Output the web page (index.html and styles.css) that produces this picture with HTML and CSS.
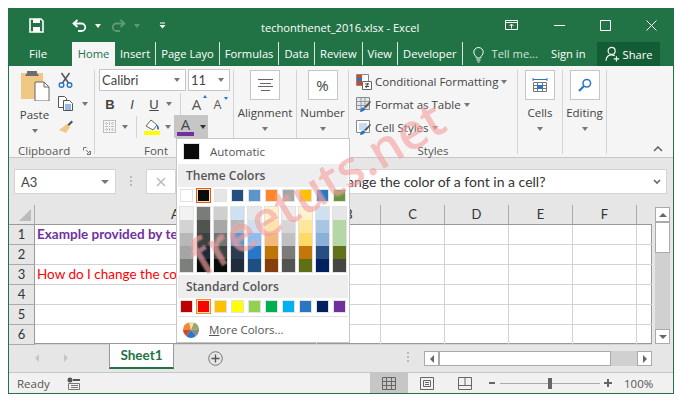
FILE: index.html
```html
<!DOCTYPE html>
<html lang="en">
<head>
  <meta charset="UTF-8">
  <title>techonthenet_2016.xlsx - Excel</title>
  <link rel="stylesheet" href="styles.css">
</head>
<body>
  <div class="window">

    <!-- title bar -->
    <div class="titlebar">
      <div class="qat">
        <svg class="qat-save" width="15" height="15" viewBox="0 0 15 15"><path d="M1 1h11l2 2v11H1z" fill="none" stroke="#fff" stroke-width="1.6"/><path d="M4 1h7v4H4zM4 9h7v5H4z" fill="#fff"/></svg>
        <svg class="qat-undo" width="15" height="13" viewBox="0 0 15 13"><path d="M5.5 1 1.5 4.5 5.5 8M2 4.5h7.5a3.6 3.6 0 0 1 0 7.5H6" fill="none" stroke="#fff" stroke-width="1.8"/></svg>
        <span class="caret caret-white"></span>
        <svg class="qat-redo" width="15" height="13" viewBox="0 0 15 13"><path d="M9.5 1l4 3.5-4 3.5M13 4.5H5.5a3.6 3.6 0 0 0 0 7.5H9" fill="none" stroke="#5c9a78" stroke-width="1.8"/></svg>
        <span class="caret caret-dim"></span>
        <svg class="qat-more" width="7" height="7" viewBox="0 0 7 7"><path d="M1 1h5" stroke="#fff"/><path d="M0.5 3h6L3.5 6.5z" fill="#fff"/></svg>
      </div>
      <div class="doc-title">techonthenet_2016.xlsx - Excel</div>
      <div class="winctl">
        <svg width="14" height="11" viewBox="0 0 14 11"><path d="M.5.5h12v9H.5zM.5 2.500h12M6.500 8.500V4M4.500 6l2-2 2 2" fill="none" stroke="#fff"/></svg>
        <svg width="11" height="11" viewBox="0 0 11 11"><path d="M0 5.500h11" stroke="#fff"/></svg>
        <svg width="11" height="11" viewBox="0 0 11 11"><path d="M.5.500h10v10H.5z" fill="none" stroke="#fff"/></svg>
        <svg width="11" height="11" viewBox="0 0 11 11"><path d="M.5.500l10 10M10.500.500l-10 10" stroke="#fff"/></svg>
      </div>
    </div>

    <!-- tabs -->
    <div class="tabs">
      <span class="tab-file">File</span>
      <span class="tab-home">Home</span>
      <span class="tab">Insert</span>
      <span class="tab">Page Layo</span>
      <span class="tab">Formulas</span>
      <span class="tab">Data</span>
      <span class="tab">Review</span>
      <span class="tab">View</span>
      <span class="tab">Developer</span>
      <svg class="bulb" width="11" height="16" viewBox="0 0 11 16"><path d="M3.500 11C3 8.500.8 8 .8 5.200a4.700 4.700 0 0 1 9.400 0C10.200 8 8 8.500 7.500 11zM3.500 13h4M4.500 15h2" fill="none" stroke="#fff"/></svg>
      <span class="tell">Tell me...</span>
      <span class="signin">Sign in</span>
      <span class="share">
        <svg width="15" height="16" viewBox="0 0 17 17"><circle cx="7.500" cy="5" r="4" fill="none" stroke="#fff" stroke-width="1.300"/><path d="M1 16c.5-4 3-6.500 6.500-6.500 1.500 0 2.500.4 3.500 1M10 14h6M13 11v6" fill="none" stroke="#fff" stroke-width="1.300"/></svg>
        Share
      </span>
    </div>

    <!-- ribbon -->
    <div class="ribbon">
      <div class="group group-clipboard">
        <div class="group-body clip-body">
          <div class="paste">
            <svg width="30" height="31" viewBox="0 0 30 31"><path d="M1 3h22v26H1z" fill="#efc983"/><path d="M7 3V1h10v2l2 3H5z" fill="#6d6d6d"/><path d="M15 12h9l5 5v14H15z" fill="#fff" stroke="#666"/><path d="M24 12v5h5" fill="none" stroke="#666"/></svg>
            <span class="paste-label">Paste</span>
            <span class="caret"></span>
          </div>
          <div class="clip-tools">
            <svg width="15" height="16" viewBox="0 0 15 16"><path d="M3.500 1l7 10M11.500 1l-7 10" stroke="#555" stroke-width="1.500"/><circle cx="3.500" cy="13" r="2.300" fill="none" stroke="#2b76c4" stroke-width="1.400"/><circle cx="11.500" cy="13" r="2.300" fill="none" stroke="#2b76c4" stroke-width="1.400"/></svg>
            <div class="copy-row">
              <svg width="15" height="15" viewBox="0 0 15 15"><path d="M.5.500h6l2 2v9h-8z" fill="#fff" stroke="#555"/><path d="M5.500 4.500h6l3 3v7h-9z" fill="#fff" stroke="#555"/><path d="M7 9h6M7 11h6M7 13h6" stroke="#2b76c4"/></svg>
              <span class="caret"></span>
            </div>
            <svg width="16" height="15" viewBox="0 0 16 15"><path d="M9 5l3 3-4 6-7-3z" fill="#efc983"/><path d="M9.500 5.500l4-4 1.500 1.500-4 4z" fill="#555"/></svg>
          </div>
        </div>
        <div class="group-label label-clipboard">Clipboard
          <svg width="8" height="8" viewBox="0 0 8 8"><path d="M.5 3.500v-3h3M7.500 4v3.500H4M3 3l3.500 3.500M4 7l3-3" fill="none" stroke="#777"/></svg>
        </div>
      </div>

      <div class="group group-font">
        <div class="group-body font-body">
          <div class="font-row">
            <div class="combo combo-name">Calibri<span class="caret"></span></div>
            <div class="combo combo-size">11<span class="caret"></span></div>
          </div>
          <div class="font-row row-style">
            <b class="fmt">B</b>
            <i class="fmt">I</i>
            <u class="fmt">U</u>
            <span class="caret"></span>
            <span class="vsep"></span>
            <span class="grow">A<em class="tri-up"></em></span>
            <span class="shrink">A<em class="tri-down"></em></span>
          </div>
          <div class="font-row row-color">
            <svg width="13" height="13" viewBox="0 0 13 13"><path d="M.5.500h12v12H.5z" fill="none" stroke="#888" stroke-dasharray="1 1"/><path d="M6.500 0v13M0 6.500h13M0 3.500h13M0 9.500h13M3.500 0v13M9.500 0v13" stroke="#bbb" stroke-dasharray="1 1"/></svg>
            <span class="caret"></span>
            <span class="vsep vsep-tall"></span>
            <span class="fill-icon">
              <svg width="16" height="12" viewBox="0 0 16 12"><path d="M2 7l5-6 6 5-4 5z" fill="#fff" stroke="#666"/><path d="M13 6c1 0 2 2 2 3.500S13 11 13 9z" fill="#2b76c4"/></svg>
              <em class="fill-bar"></em>
            </span>
            <span class="caret caret-fill"></span>
            <span class="color-btn">
              <span class="color-a">A<em class="color-bar"></em></span>
              <span class="caret caret-dark"></span>
            </span>
          </div>
        </div>
        <div class="group-label label-font">Font</div>
      </div>

      <div class="group group-align">
        <div class="big-btn">
          <span class="big-box">
            <svg width="15" height="12" viewBox="0 0 15 12"><path d="M0 .5h15M2 4.500h11M0 7.500h15M3 11.500h9" stroke="#666"/></svg>
          </span>
          <span class="big-label">Alignment</span>
          <span class="caret"></span>
        </div>
      </div>

      <div class="group group-number">
        <div class="big-btn">
          <span class="big-box big-pct">%</span>
          <span class="big-label">Number</span>
          <span class="caret"></span>
        </div>
      </div>

      <div class="group group-styles">
        <div class="group-body styles-body">
          <div class="style-row">
            <svg width="16" height="16" viewBox="0 0 16 16"><path d="M.5.500h12v11H.5z" fill="#fff" stroke="#888"/><path d="M1 1h5v3H1z" fill="#d24726"/><path d="M1 4h5v3H1z" fill="#2b76c4"/><path d="M1 7h5v4H1z" fill="#d24726"/><path d="M6.500 7.500h9v8h-9z" fill="#fff" stroke="#666"/><path d="M9 10h4M9 12.500h4M10 14l2-5" stroke="#444"/></svg>
            <span>Conditional Formatting</span><span class="caret"></span>
          </div>
          <div class="style-row">
            <svg width="16" height="16" viewBox="0 0 16 16"><path d="M.5.500h13v12H.5z" fill="#dfe6ee" stroke="#888"/><path d="M5 1v11M9 1v11M1 4.500h12M1 8.500h12" stroke="#999"/><path d="M15 5l-5 6-2-1 6-6z" fill="#555"/><path d="M4 15c0-3 2-5 4-4.500s1 4.500-4 4.500z" fill="#2b76c4"/></svg>
            <span>Format as Table</span><span class="caret"></span>
          </div>
          <div class="style-row">
            <svg width="16" height="16" viewBox="0 0 16 16"><path d="M.5.500h13v12H.5z" fill="#fff" stroke="#888"/><path d="M3 3h8v7H3z" fill="#c8dcef"/><path d="M15 5l-5 6-2-1 6-6z" fill="#555"/><path d="M4 15c0-3 2-5 4-4.500s1 4.500-4 4.500z" fill="#2b76c4"/></svg>
            <span>Cell Styles</span><span class="caret"></span>
          </div>
        </div>
        <div class="group-label">Styles</div>
      </div>

      <div class="group group-cells">
        <div class="big-btn">
          <span class="big-box">
            <svg width="16" height="15" viewBox="0 0 16 15"><path d="M1 1.500h14M1 0v3M15 0v3" stroke="#2b76c4"/><path d="M1.500 4.500h13v9h-13zM1.500 7.500h13M1.500 10.500h13M5.500 4.500v9M10.500 4.500v9" fill="none" stroke="#777"/><path d="M5 7h6v4H5z" fill="#2b76c4"/></svg>
          </span>
          <span class="big-label">Cells</span>
          <span class="caret"></span>
        </div>
      </div>

      <div class="group group-editing">
        <div class="big-btn">
          <span class="big-box">
            <svg width="14" height="14" viewBox="0 0 14 14"><circle cx="8.800" cy="5.200" r="3.800" fill="none" stroke="#2b76c4" stroke-width="1.500"/><path d="M6 8l-5 5" stroke="#2b76c4" stroke-width="2.200"/></svg>
          </span>
          <span class="big-label">Editing</span>
          <span class="caret"></span>
        </div>
      </div>

      <svg class="collapse" width="10" height="6" viewBox="0 0 10 6"><path d="M1 5l4-4 4 4" fill="none" stroke="#666" stroke-width="1.600"/></svg>
    </div>

    <!-- formula bar -->
    <div class="formula">
      <div class="namebox">A3<span class="caret"></span></div>
      <span class="dots"></span>
      <div class="fx-btn">
        <svg width="10" height="10" viewBox="0 0 10 10"><path d="M1 1l8 8M9 1l-8 8" stroke="#bbb" stroke-width="1.500"/></svg>
      </div>
      <div class="formula-input">
        <span class="formula-text">How do I change the color of a font in a cell?</span>
        <svg width="8" height="6" viewBox="0 0 8 6"><path d="M1 1l3 3 3-3" fill="none" stroke="#666" stroke-width="1.600"/></svg>
      </div>
    </div>

    <!-- sheet -->
    <div class="sheet">
      <div class="grid">
        <div class="corner"><em></em></div><div class="ch">A</div><div class="ch">B</div><div class="ch">C</div><div class="ch">D</div><div class="ch">E</div><div class="ch">F</div><div class="ch ch-end"></div>

        <div class="rh">1</div><div class="c c-example">Example provided by techonthenet.com</div><div class="c"></div><div class="c"></div><div class="c"></div><div class="c"></div><div class="c"></div><div class="c"></div>
        <div class="rh">2</div><div class="c"></div><div class="c"></div><div class="c"></div><div class="c"></div><div class="c"></div><div class="c"></div><div class="c"></div>
        <div class="rh">3</div><div class="c c-question">How do I change the color of a font in a cell?</div><div class="c"></div><div class="c"></div><div class="c"></div><div class="c"></div><div class="c"></div><div class="c"></div>
        <div class="rh">4</div><div class="c"></div><div class="c"></div><div class="c"></div><div class="c"></div><div class="c"></div><div class="c"></div><div class="c"></div>
        <div class="rh">5</div><div class="c"></div><div class="c"></div><div class="c"></div><div class="c"></div><div class="c"></div><div class="c"></div><div class="c"></div>
        <div class="rh">6</div><div class="c"></div><div class="c"></div><div class="c"></div><div class="c"></div><div class="c"></div><div class="c"></div><div class="c"></div>
      </div>
      <div class="vscroll">
        <span class="sb-btn"><em class="arr-up"></em></span>
        <span class="sb-thumb-v"></span>
        <span class="sb-track"></span>
        <span class="sb-btn"><em class="arr-down"></em></span>
      </div>
    </div>

    <!-- sheet tabs -->
    <div class="sheetbar">
      <span class="nav-l"></span>
      <span class="nav-r"></span>
      <span class="sheet-tab">Sheet1</span>
      <svg class="add-sheet" width="15" height="15" viewBox="0 0 15 15"><circle cx="7.500" cy="7.500" r="6.800" fill="none" stroke="#777"/><path d="M7.500 3.500v8M3.500 7.500h8" stroke="#555" stroke-width="1.300"/></svg>
      <span class="dots dots-h"></span>
      <div class="hscroll">
        <span class="sb-btn-h"><em class="arr-left"></em></span>
        <span class="sb-thumb-h"></span>
        <span class="sb-track"></span>
        <span class="sb-btn-h"><em class="arr-right"></em></span>
      </div>
    </div>

    <!-- status bar -->
    <div class="statusbar">
      <span class="ready">Ready</span>
      <svg class="macro" width="13" height="13" viewBox="0 0 13 13"><circle cx="3" cy="3" r="2.500" fill="#555"/><path d="M6 2h7v2H6z" fill="#555"/><path d="M1.500 6.500h11v6h-11zM4 8.500h7M4 10.500h7" fill="none" stroke="#777"/></svg>
      <span class="view-active">
        <svg width="14" height="13" viewBox="0 0 14 13"><path d="M.5.500h13v12H.5zM.5 4.500h13M.5 8.500h13M4.500.500v12M9.500.500v12" fill="none" stroke="#666"/></svg>
      </span>
      <svg class="view-layout" width="14" height="13" viewBox="0 0 14 13"><path d="M.5.500h13v12H.5z" fill="none" stroke="#666"/><path d="M3.500 3.500h7v6h-7zM5 5.500h4M5 7.500h4" fill="none" stroke="#666"/></svg>
      <svg class="view-break" width="14" height="13" viewBox="0 0 14 13"><path d="M.5.500h13v12H.5zM.5 8.500h13M7 .500v8" fill="none" stroke="#666"/></svg>
      <span class="zoom-minus"></span>
      <span class="slider"><em></em></span>
      <span class="zoom-plus"></span>
      <span class="zoom-val">100%</span>
    </div>

    <!-- font colour dropdown -->
    <div class="colormenu">
      <div class="auto-row"><span class="auto-swatch"></span><span>Automatic</span></div>
      <div class="menu-head">Theme Colors</div>
      <div class="swatches">
        <span style="background:#ffffff"></span>
        <span class="picked" style="background:#090c0a"></span>
        <span style="background:#e7e6e6"></span>
        <span style="background:#254f80"></span>
        <span style="background:#5b95cc"></span>
        <span style="background:#ff862a"></span>
        <span style="background:#a5a5a5"></span>
        <span style="background:#ffc000"></span>
        <span style="background:#2a75c4"></span>
        <span style="background:#6b9440"></span>
      </div>
      <div class="tints">
        <div class="tint"><span style="background:#f2f2f2"></span><span style="background:#d3d3d3"></span><span style="background:#b8b6b7"></span><span style="background:#a6a5a6"></span><span style="background:#7d7f7c"></span></div>
        <div class="tint"><span style="background:#7a7c7a"></span><span style="background:#50534f"></span><span style="background:#3e413d"></span><span style="background:#20283a"></span><span style="background:#070c09"></span></div>
        <div class="tint"><span style="background:#cfcfcf"></span><span style="background:#a8a7a8"></span><span style="background:#727470"></span><span style="background:#404240"></span><span style="background:#080d09"></span></div>
        <div class="tint"><span style="background:#cfe0f1"></span><span style="background:#b8b6ba"></span><span style="background:#6a93c2"></span><span style="background:#2c3b52"></span><span style="background:#202b3b"></span></div>
        <div class="tint"><span style="background:#e6e6e6"></span><span style="background:#cde0f2"></span><span style="background:#8fbcf0"></span><span style="background:#2577c9"></span><span style="background:#1f4e80"></span></div>
        <div class="tint"><span style="background:#fff1cc"></span><span style="background:#ffe4a8"></span><span style="background:#f4b87a"></span><span style="background:#bf7505"></span><span style="background:#843f0b"></span></div>
        <div class="tint"><span style="background:#ededed"></span><span style="background:#d6d6d6"></span><span style="background:#c0c0c0"></span><span style="background:#7b7b7a"></span><span style="background:#525452"></span></div>
        <div class="tint"><span style="background:#fff2cc"></span><span style="background:#ffe69a"></span><span style="background:#ffd966"></span><span style="background:#c4760b"></span><span style="background:#5e6f15"></span></div>
        <div class="tint"><span style="background:#cfe0f1"></span><span style="background:#a8c6e3"></span><span style="background:#8aafd8"></span><span style="background:#264e80"></span><span style="background:#00205f"></span></div>
        <div class="tint"><span style="background:#e6e6e6"></span><span style="background:#b5d7a6"></span><span style="background:#b5d7a6"></span><span style="background:#62721a"></span><span style="background:#444644"></span></div>
      </div>
      <div class="menu-head head-std">Standard Colors</div>
      <div class="swatches">
        <span style="background:#c00000"></span>
        <span class="picked-light" style="background:#ff0000"></span>
        <span style="background:#ffc000"></span>
        <span style="background:#ffff00"></span>
        <span style="background:#92d050"></span>
        <span style="background:#00b050"></span>
        <span style="background:#00b0f0"></span>
        <span style="background:#2a75c4"></span>
        <span style="background:#002060"></span>
        <span style="background:#7030a0"></span>
      </div>
      <div class="more-row">
        <svg width="16" height="16" viewBox="0 0 16 16"><path d="M8 8 6 .500a8 8 0 0 1 5 0z" fill="#f3dfa2"/><path d="M8 8l3-7.500A8 8 0 0 1 16 7z" fill="#9aa66a"/><path d="M8 8l8-1a8 8 0 0 1-3 7z" fill="#8a8a8a"/><path d="M8 8l5 6a8 8 0 0 1-10 0z" fill="#2a75c4"/><path d="M8 8l-5 6A8 8 0 0 1 0 8z" fill="#d24726"/><path d="M8 8H0A8 8 0 0 1 6 .500z" fill="#f0863a"/></svg>
        <span><u>M</u>ore Colors...</span>
      </div>
    </div>

    <div class="watermark">freetuts.net</div>
  </div>
</body>
</html>
```

FILE: styles.css
```css
* {
  box-sizing: border-box;
}

body {
  margin: 0;
  background: #fff;
  font-family: "Open Sans", "Noto Sans", sans-serif;
  font-size: 11.5px;
  color: #444;
}

em {
  font-style: normal;
}

.window {
  position: relative;
  width: 666px;
  height: 386px;
  margin: 8px;
  border: 1px solid #217346;
  background: #e6e6e6;
  overflow: hidden;
  display: flex;
  flex-direction: column;
}

.caret {
  display: inline-block;
  width: 0;
  height: 0;
  border-left: 3.5px solid transparent;
  border-right: 3.5px solid transparent;
  border-top: 4px solid #777;
}

.caret-white { border-top-color: #fff; }
.caret-dim { border-top-color: #5c9a78; }
.caret-dark { border-top-color: #333; }

/* title bar */
.titlebar {
  height: 33px;
  background: #217346;
  color: #fff;
  display: flex;
  align-items: center;
  flex: none;
}

.qat {
  width: 252px;
  display: flex;
  align-items: center;
  padding-left: 20px;
}

.qat-undo { margin-left: 28px; }
.qat .caret-white { margin-left: 8px; }
.qat-redo { margin-left: 10px; }
.qat .caret-dim { margin-left: 8px; }
.qat-more { margin-left: 19px; }

.doc-title {
  width: 244px;
  font-size: 11.1px;
  padding-top: 4px;
}

.winctl {
  display: flex;
  align-items: center;
  gap: 35px;
}

/* tabs */
.tabs {
  height: 24px;
  background: #217346;
  color: #fff;
  display: flex;
  align-items: stretch;
  flex: none;
  font-size: 11.2px;
  line-height: 23px;
  white-space: nowrap;
}

.tab-file {
  width: 63px;
  padding-left: 20px;
  font-size: 11.5px;
}

.tab-home {
  width: 43px;
  background: #f5f5f5;
  color: #217346;
  text-align: center;
}

.tab {
  padding: 0 6px 0 5px;
  position: relative;
}

.tab::after {
  content: "";
  position: absolute;
  right: 0;
  top: 0;
  width: 1px;
  height: 23px;
  background: #d8e6de;
}

.bulb {
  margin: 5px 0 0 10px;
}

.tell {
  margin-left: 8px;
  color: #cfe3d8;
}

.signin {
  margin-left: 13px;
}

.share {
  margin-left: 11px;
  width: 63px;
  background: #135c36;
  display: flex;
  align-items: center;
  gap: 3px;
  padding-left: 8px;
}

/* ribbon */
.ribbon {
  position: relative;
  height: 92px;
  background: #f5f5f5;
  border-bottom: 1px solid #c6c6c6;
  display: flex;
  padding-top: 4px;
  flex: none;
}

.group {
  height: 84px;
  border-right: 1px solid #d4d4d4;
  display: flex;
  flex-direction: column;
}

.group-clipboard { width: 86px; }
.group-font { width: 139px; }
.group-align { width: 63px; }
.group-number { width: 52px; }
.group-styles { width: 169px; }
.group-cells { width: 45px; }
.group-editing { width: 44px; }

.group-body {
  flex: 1;
}

.group-label {
  height: 14px;
  line-height: 14px;
  margin-bottom: -4px;
  text-align: center;
  color: #555;
}

.label-clipboard {
  text-align: left;
  padding-left: 9px;
  display: flex;
  align-items: center;
  gap: 13px;
}

.label-font {
  padding-right: 16px;
}

.clip-body {
  display: flex;
}

.paste {
  width: 49px;
  display: flex;
  flex-direction: column;
  align-items: center;
  padding-left: 2px;
}

.paste-label {
  margin-top: 6px;
  line-height: 16px;
}

.paste .caret {
  margin-top: 6px;
}

.clip-tools {
  display: flex;
  flex-direction: column;
  gap: 8px;
  padding-top: 2px;
}

.copy-row {
  display: flex;
  align-items: center;
  gap: 9px;
}

/* font group */
.font-body {
  padding-left: 4px;
}

.font-row {
  display: flex;
  align-items: center;
}

.combo {
  height: 22px;
  margin-top: -1px;
  background: #fff;
  border: 1px solid #c6c6c6;
  font-family: Lato, sans-serif;
  font-size: 13px;
  display: flex;
  align-items: center;
  justify-content: space-between;
  padding: 0 5px 0 2px;
}

.combo-name { width: 87px; }
.combo-size { width: 42px; margin-left: 2px; }

.row-style {
  height: 22px;
  margin-top: 2px;
}

.fmt {
  width: 22px;
  text-align: center;
  font-size: 13px;
  font-family: "Liberation Sans", sans-serif;
}

.row-style .caret {
  margin-left: 1px;
}

.vsep {
  width: 1px;
  height: 22px;
  background: #d4d4d4;
  margin-left: 8px;
}

.grow, .shrink {
  position: relative;
  width: 21px;
  text-align: center;
  font-size: 15px;
  color: #555;
}

.grow { margin-left: 5px; }

.shrink {
  font-size: 12.500px;
}

.tri-up, .tri-down {
  position: absolute;
  top: 1px;
  right: 0;
  width: 0;
  height: 0;
  border-left: 2.500px solid transparent;
  border-right: 2.500px solid transparent;
}

.tri-up { border-bottom: 3px solid #2a75c4; }
.tri-down { border-top: 3px solid #2a75c4; }

.row-color {
  height: 23px;
  padding-left: 4px;
}

.row-color .caret {
  margin-left: 6px;
}

.vsep-tall {
  margin-left: 8px;
}

.fill-icon {
  margin-left: 7px;
  width: 16px;
  display: flex;
  flex-direction: column;
}

.fill-bar {
  height: 4px;
  background: #ffff00;
}

.row-color .caret-fill {
  margin-left: 5px;
}

.color-btn {
  width: 34px;
  height: 23px;
  margin-left: 3px;
  background: #c6c6c6;
  display: flex;
  align-items: center;
  padding-left: 3px;
  gap: 6px;
}

.color-a {
  width: 17px;
  height: 19px;
  text-align: center;
  font-size: 15px;
  line-height: 15px;
  color: #444;
  display: flex;
  flex-direction: column;
}

.color-bar {
  height: 4px;
  flex: none;
  background: #7030a0;
}

.color-btn .caret {
  margin-left: 0;
}

/* big ribbon buttons */
.big-btn {
  display: flex;
  flex-direction: column;
  align-items: center;
}

.big-box {
  width: 30px;
  height: 30px;
  background: #fff;
  border: 1px solid #c6c6c6;
  display: flex;
  align-items: center;
  justify-content: center;
}

.big-pct {
  font-size: 15px;
  color: #444;
}

.big-label {
  margin-top: 5px;
  line-height: 16px;
}

.big-btn .caret {
  margin-top: 6px;
}

.styles-body {
  padding: 0 0 0 7px;
}

.style-row {
  height: 23px;
  display: flex;
  align-items: center;
  gap: 3px;
  white-space: nowrap;
}

.collapse {
  position: absolute;
  right: 10px;
  top: 80px;
}

/* formula bar */
.formula {
  height: 47px;
  padding: 11px 6px 11px 5px;
  display: flex;
  align-items: stretch;
  flex: none;
}

.namebox {
  width: 102px;
  background: #fff;
  border: 1px solid #d4d4d4;
  display: flex;
  align-items: center;
  justify-content: space-between;
  padding: 0 6px 0 6px;
  font-family: Lato, sans-serif;
  font-size: 13px;
}

.namebox .caret {
  border-left-width: 4px;
  border-right-width: 4px;
}

.dots {
  width: 2px;
  height: 10px;
  margin: 7px 14px 0 14px;
  background: repeating-linear-gradient(#bbb 0 2px, transparent 2px 4px);
}

.fx-btn {
  width: 30px;
  background: #fff;
  border: 1px solid #d4d4d4;
  display: flex;
  align-items: center;
  justify-content: center;
}

.formula-input {
  flex: 1;
  background: #fff;
  border: 1px solid #d4d4d4;
  display: flex;
  align-items: center;
  justify-content: space-between;
  padding: 0 5px 0 96px;
}

.formula-text {
  font-family: Lato, sans-serif;
  font-size: 14px;
  color: #333;
}

/* sheet */
.sheet {
  height: 139px;
  display: flex;
  flex: none;
}

.grid {
  width: 643px;
  display: grid;
  grid-template-columns: 26px 282px 64px 64px 64px 64px 64px 15px;
  grid-template-rows: 20px repeat(6, 20px);
  background: #fff;
  border-right: 1px solid #999;
  border-bottom: 1px solid #999;
}

.corner {
  background: #e6e6e6;
  border-right: 1px solid #aaa;
  border-bottom: 1px solid #999;
  position: relative;
}

.corner em {
  position: absolute;
  right: 3px;
  bottom: 3px;
  width: 0;
  height: 0;
  border-left: 12px solid transparent;
  border-bottom: 12px solid #bbb;
}

.ch {
  background: #e6e6e6;
  border-right: 1px solid #aaa;
  border-bottom: 1px solid #999;
  text-align: center;
  font-family: Lato, sans-serif;
  font-size: 13px;
  line-height: 19px;
  color: #333;
}

.ch-end {
  border-right: 0;
}

.rh {
  background: #e6e6e6;
  border-right: 1px solid #999;
  border-bottom: 1px solid #aaa;
  text-align: center;
  font-family: Lato, sans-serif;
  font-size: 13px;
  line-height: 19px;
  color: #333;
}

.c {
  border-right: 1px solid #d4d4d4;
  border-bottom: 1px solid #d4d4d4;
  padding-left: 2px;
  font-family: Lato, sans-serif;
  font-size: 13.500px;
  line-height: 19px;
  white-space: nowrap;
}

.c:nth-child(8n) {
  border-right: 0;
}

.c-example {
  color: #7030a0;
  font-weight: 700;
}

.c-question {
  color: #ff0000;
}

.vscroll {
  width: 15px;
  margin: 2px 0 0 3px;
  background: #d0d0d0;
  display: flex;
  flex-direction: column;
}

.sb-btn {
  height: 15px;
  background: #fff;
  border: 1px solid #aaa;
  display: flex;
  align-items: center;
  justify-content: center;
}

.sb-thumb-v {
  height: 31px;
  background: #fff;
  border: 1px solid #aaa;
}

.sb-track {
  flex: 1;
}

.arr-up, .arr-down, .arr-left, .arr-right {
  width: 0;
  height: 0;
}

.arr-up {
  border-left: 4px solid transparent;
  border-right: 4px solid transparent;
  border-bottom: 4px solid #666;
}

.arr-down {
  border-left: 4px solid transparent;
  border-right: 4px solid transparent;
  border-top: 4px solid #666;
}

.arr-left {
  border-top: 4px solid transparent;
  border-bottom: 4px solid transparent;
  border-right: 4px solid #666;
}

.arr-right {
  border-top: 4px solid transparent;
  border-bottom: 4px solid transparent;
  border-left: 4px solid #666;
}

/* sheet tabs */
.sheetbar {
  height: 28px;
  display: flex;
  align-items: flex-start;
  flex: none;
}

.nav-l, .nav-r {
  width: 0;
  height: 0;
  margin-top: 10px;
  border-top: 4px solid transparent;
  border-bottom: 4px solid transparent;
}

.nav-l {
  margin-left: 26px;
  border-right: 4px solid #c4c4c4;
}

.nav-r {
  margin-left: 25px;
  border-left: 4px solid #c4c4c4;
}

.sheet-tab {
  width: 65px;
  height: 25px;
  margin-left: 41px;
  background: #fff;
  border-left: 1px solid #999;
  border-right: 1px solid #999;
  border-bottom: 2px solid #217346;
  color: #217346;
  font-family: Lato, sans-serif;
  font-weight: 700;
  font-size: 13.500px;
  line-height: 22px;
  text-align: center;
}

.add-sheet {
  margin: 7px 0 0 34px;
}

.dots-h {
  margin: 8px 0 0 184px;
}

.hscroll {
  width: 228px;
  height: 15px;
  margin: 7px 0 0 15px;
  background: #d0d0d0;
  display: flex;
}

.sb-btn-h {
  width: 15px;
  background: #fff;
  border: 1px solid #aaa;
  display: flex;
  align-items: center;
  justify-content: center;
}

.sb-thumb-h {
  width: 172px;
  background: #fff;
  border: 1px solid #aaa;
}

/* status bar */
.statusbar {
  flex: 1;
  background: #f1f1f1;
  border-top: 1px solid #c6c6c6;
  display: flex;
  align-items: center;
  color: #555;
  font-size: 11.500px;
}

.ready {
  margin-left: 8px;
  width: 50px;
}

.view-active {
  width: 38px;
  height: 100%;
  margin-left: 290px;
  background: #c6c6c6;
  display: flex;
  align-items: center;
  justify-content: center;
}

.view-layout { margin-left: 12px; }
.view-break { margin-left: 24px; }

.zoom-minus {
  width: 6px;
  height: 2px;
  margin-left: 17px;
  background: #666;
}

.slider {
  position: relative;
  width: 100px;
  height: 1px;
  margin-left: 5px;
  background: #aaa;
}

.slider em {
  position: absolute;
  left: 48px;
  top: -5px;
  width: 4px;
  height: 11px;
  background: #666;
}

.zoom-plus {
  position: relative;
  width: 8px;
  height: 2px;
  margin-left: 4px;
  background: #666;
}

.zoom-plus::after {
  content: "";
  position: absolute;
  left: 3px;
  top: -3px;
  width: 2px;
  height: 8px;
  background: #666;
}

.zoom-val {
  margin-left: 12px;
}

/* font colour dropdown */
.colormenu {
  position: absolute;
  left: 167px;
  top: 129px;
  width: 174px;
  height: 205px;
  background: #fff;
  border: 1px solid #c6c6c6;
  padding: 0 1px;
}

.auto-row {
  height: 25px;
  display: flex;
  align-items: center;
  padding-left: 5px;
  gap: 10px;
  color: #555;
}

.auto-swatch {
  width: 17px;
  height: 17px;
  background: #090c0a;
  border: 1px solid #e2e2e2;
}

.menu-head {
  height: 23px;
  background: #eeeeee;
  padding-left: 8px;
  font-size: 12px;
  font-weight: 600;
  line-height: 23px;
  color: #555;
}

.head-std {
  margin-top: 3px;
}

.swatches {
  display: flex;
  gap: 4px;
  padding: 2px 0 0 2px;
}

.swatches span {
  width: 13px;
  height: 13px;
  border: 1px solid #e2e2e2;
}

.swatches .picked {
  outline: 1px solid #e8571f;
  border-color: #f7e3a8;
}

.swatches .picked-light {
  outline: 1px solid #f08a3a;
  border-color: #f7e3a8;
}

.tints {
  display: flex;
  gap: 4px;
  padding: 5px 0 0 2px;
}

.tint {
  width: 13px;
  display: flex;
  flex-direction: column;
  outline: 1px solid #e2e2e2;
}

.tint span {
  height: 13px;
}

.more-row {
  height: 26px;
  margin-top: 3px;
  border-top: 1px solid #e2e2e2;
  display: flex;
  align-items: center;
  padding-left: 5px;
  gap: 10px;
  color: #555;
}

.watermark {
  position: absolute;
  left: 164px;
  top: 150px;
  font-family: "Open Sans", sans-serif;
  font-weight: 600;
  font-size: 50px;
  line-height: 56px;
  color: rgba(232, 60, 60, 0.3);
  text-shadow: 0 0 2px rgba(255, 255, 255, 0.5);
  white-space: nowrap;
  transform: rotate(-31deg);
  pointer-events: none;
}
```
